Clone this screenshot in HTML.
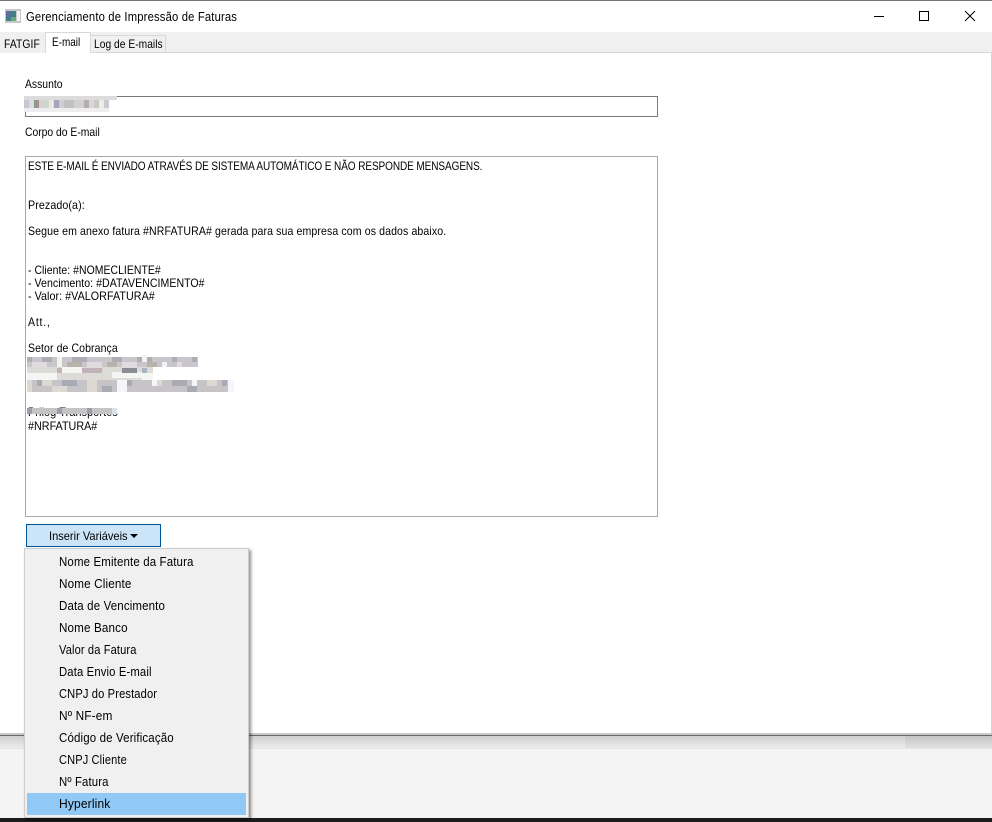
<!DOCTYPE html>
<html><head><meta charset="utf-8"><style>
html,body{margin:0;padding:0;background:#fff}
#p{position:relative;width:992px;height:822px;overflow:hidden;background:#fff;font-family:"Liberation Sans",sans-serif;font-size:12px;color:#000}
#p div{position:absolute;box-sizing:border-box}
.t{white-space:nowrap;line-height:14px;height:14px;transform-origin:0 50%}
.m{font-size:12.5px;left:59px;letter-spacing:.15px}
</style></head><body><div id="p">
<div style="left:0;top:0;width:992px;height:1px;background:#777"></div>
<div style="left:0;top:32px;width:992px;height:21px;background:#f0f0f0"></div>
<div style="left:0;top:52px;width:992px;height:1px;background:#d9d9d9"></div>
<svg style="position:absolute;left:5px;top:9px" width="16" height="14"><rect width="16" height="14" fill="#c8c8c8"/><rect x="1" y="2" width="10" height="10" fill="#3f7f86"/><rect x="1" y="2" width="5" height="6" fill="#5a6f9a"/><rect x="6" y="8" width="5" height="4" fill="#6aa878"/><rect x="12" y="2" width="3" height="10" fill="#f2f2f2"/></svg>
<div class="t" style="left:26px;top:10px;font-size:12.5px;letter-spacing:.18px;transform:scaleX(.9)">Gerenciamento de Impressão de Faturas</div>
<svg style="position:absolute;left:870px;top:8px" width="112" height="18" fill="none" stroke="#000" stroke-width="1"><path d="M4 8.5H14M49.500 3.500H58.500V12.500H49.500ZM95 3L105 13M105 3L95 13"/></svg>
<div style="left:0;top:35px;width:46px;height:18px;background:#f0f0f0;border-right:1px solid #d9d9d9"></div>
<div class="t" style="left:4px;top:37px;font-size:12px;letter-spacing:.1px;transform:scaleX(.86)">FATGIF</div>
<div style="left:45px;top:32px;width:46px;height:21px;background:#fff;border:1px solid #d9d9d9;border-bottom:0"></div>
<div class="t" style="left:52px;top:35px;font-size:12px;transform:scaleX(.83)">E-mail</div>
<div style="left:90px;top:35px;width:76px;height:18px;background:#f0f0f0;border:1px solid #d9d9d9"></div>
<div class="t" style="left:94px;top:37px;font-size:12px;letter-spacing:.04px;transform:scaleX(.852)">Log de E-mails</div>
<div class="t" style="left:25px;top:77px;transform:scaleX(.865)">Assunto</div>
<div style="left:25px;top:96px;width:633px;height:21px;border:1px solid #7a7a7a;background:#fff"></div>
<div style="left:24px;top:96px;width:93px;height:4px;background:#dcdcdc"></div>
<svg style="position:absolute;left:24px;top:100px" width="90" height="12" shape-rendering="crispEdges">
<path fill="#c9c6d2" d="M0 0h5v8H0z"/><path fill="#dadde0" d="M5 0h5v8H5z"/><path fill="#9c948e" d="M10 0h5v8h-5z"/><path fill="#d8d0ca" d="M15 0h5v8h-5z"/><path fill="#cfd6d6" d="M20 0h5v8h-5z"/><path fill="#e8e6de" d="M25 0h5v8h-5z"/><path fill="#a6a4b8" d="M30 0h5v8h-5z"/><path fill="#cdcdd4" d="M35 0h5v8h-5z"/><path fill="#bfc2c0" d="M40 0h10v8H40z"/><path fill="#d2d0d0" d="M50 0h10v8H50z"/><path fill="#b4acb0" d="M60 0h5v8h-5z"/><path fill="#d8d6d8" d="M65 0h5v8h-5z"/><path fill="#c4ccc4" d="M70 0h5v8h-5z"/><path fill="#ecece8" d="M75 0h5v8h-5z"/><path fill="#c8ccd0" d="M80 0h5v8h-5z"/>
<path fill="#eeeef0" d="M0 8h85v4H0z"/>
</svg>
<div class="t" style="left:25px;top:125px;transform:scaleX(.862)">Corpo do E-mail</div>
<div style="left:25px;top:156px;width:633px;height:361px;border:1px solid #a9a9a9;background:#fff"></div>
<div id="b" style="left:28px;top:0;width:620px;height:440px">
<div class="t" style="left:0;top:159px;letter-spacing:-.115px;transform:scaleX(.836)">ESTE E-MAIL É ENVIADO ATRAVÉS DE SISTEMA AUTOMÁTICO E NÃO RESPONDE MENSAGENS.</div>
<div class="t" style="left:0;top:198px;letter-spacing:.1px;transform:scaleX(.89)">Prezado(a):</div>
<div class="t" style="left:0;top:224px;letter-spacing:.12px;transform:scaleX(.88)">Segue em anexo fatura #NRFATURA# gerada para sua empresa com os dados abaixo.</div>
<div class="t" style="left:0;top:263px;letter-spacing:.05px;transform:scaleX(.87)">- Cliente: #NOMECLIENTE#</div>
<div class="t" style="left:0;top:276px;letter-spacing:.05px;transform:scaleX(.88)">- Vencimento: #DATAVENCIMENTO#</div>
<div class="t" style="left:0;top:289px;letter-spacing:.05px;transform:scaleX(.894)">- Valor: #VALORFATURA#</div>
<div class="t" style="left:0;top:315px;letter-spacing:.9px;transform:scaleX(.88)">Att.,</div>
<div class="t" style="left:0;top:341px;letter-spacing:.12px;transform:scaleX(.874)">Setor de Cobrança</div>
<div class="t" style="left:0;top:405px;letter-spacing:.2px;transform:scaleX(.89)">Prilog Transportes</div>
<div class="t" style="left:0;top:419px;letter-spacing:.02px;transform:scaleX(.896)">#NRFATURA#</div>
</div>
<svg style="position:absolute;left:27px;top:355px" width="207" height="60" shape-rendering="crispEdges">
<path fill="#c8c6ca" d="M0 2h171v10H0z"/>
<path fill="#aeacb4" d="M0 2h5v5H0zM15 2h10v5H15zM45 2h15v5H45zM85 2h10v5H85zM110 2h15v5H110zM145 2h5v5H145zM165 2h5v5H165z"/>
<path fill="#f2f2ee" d="M30 2h5v10H30zM115 0h5v7H115zM135 7h5v5H135z"/>
<path fill="#dedcde" d="M5 7h15v5H5zM60 7h15v5H60zM95 7h15v5H95zM150 7h5v5H150z"/>
<path fill="#b8b2aa" d="M40 7h15v5H40zM80 7h10v5H80zM120 7h10v5H120z"/>
<path fill="#dddbd8" d="M0 12h126v13H0z"/>
<path fill="#f5f5f3" d="M35 12h20v6H35zM85 17h30v6H85zM0 18h30v7H0zM115 18h11v7H115z"/>
<path fill="#c0b2b8" d="M30 13h5v5H30zM55 13h20v5H55z"/>
<path fill="#8c8c96" d="M95 13h15v5H95z"/>
<path fill="#a8b4c2" d="M115 13h5v5H115z"/>
<path fill="#c6c4c6" d="M0 25h207v12H0z"/>
<path fill="#ddd8d2" d="M0 25h5v12H0zM15 25h10v6H15zM60 25h10v12H60zM130 25h5v6H130zM180 25h10v6H180zM25 31h15v6H25z"/>
<path fill="#a8aab4" d="M10 25h5v6H10zM35 25h15v6H35zM100 25h5v6H100zM145 25h15v6H145zM195 25h5v6H195zM75 31h10v6H75zM160 31h10v6H160z"/>
<path fill="#f4f6fa" d="M90 25h10v12H90zM125 25h5v6H125zM165 25h5v6H165zM201 25h6v12H201z"/>
<path fill="#9f9ea8" d="M0 53h5v6H0zM30 53h5v6H30zM60 53h5v6H60z"/>
<path fill="#c4c4c4" d="M5 53h25v6H5zM35 53h25v6H35zM65 53h20v6H65z"/>
<path fill="#dde2e8" d="M85 53h5v6H85z"/>
</svg>
<div style="left:26px;top:524px;width:135px;height:23px;background:#cce4f7;border:1px solid #005499"></div>
<div class="t" style="left:49px;top:529px;font-size:12px;transform:scaleX(.923)">Inserir Variáveis</div>
<svg style="position:absolute;left:130px;top:534px" width="8" height="5"><path d="M0 0H8L4 4Z" fill="#000"/></svg>
<div style="left:0;top:733px;width:992px;height:2px;background:#c9c9c9"></div>
<div style="left:0;top:735px;width:992px;height:1px;background:#666"></div>
<div style="left:0;top:736px;width:905px;height:12px;background:linear-gradient(#cfcfcf,#ececec)"></div>
<div style="left:905px;top:736px;width:87px;height:12px;background:linear-gradient(#c4c4c4,#e2e2e2)"></div>
<div style="left:0;top:748px;width:992px;height:70px;background:#f4f4f4;border-top:1px solid #e4e4e4"></div>
<div style="left:0;top:818px;width:992px;height:4px;background:#1c1c1c"></div>
<div style="left:991px;top:53px;width:1px;height:680px;background:#d4d4d4"></div>
<div style="left:24px;top:548px;width:225px;height:270px;background:#f0f0f0;border:1px solid #cdcdcd;box-shadow:2px 2px 3px rgba(0,0,0,.45)"></div>
<div style="left:27px;top:793px;width:219px;height:22px;background:#90c8f6"></div>
<div class="t m" style="top:555px;transform:scaleX(.918)">Nome Emitente da Fatura</div>
<div class="t m" style="top:577px;transform:scaleX(.936)">Nome Cliente</div>
<div class="t m" style="top:599px;transform:scaleX(.92)">Data de Vencimento</div>
<div class="t m" style="top:621px;transform:scaleX(.932)">Nome Banco</div>
<div class="t m" style="top:643px;transform:scaleX(.886)">Valor da Fatura</div>
<div class="t m" style="top:665px;transform:scaleX(.903)">Data Envio E-mail</div>
<div class="t m" style="top:687px;transform:scaleX(.89)">CNPJ do Prestador</div>
<div class="t m" style="top:709px;transform:scaleX(.947)">Nº NF-em</div>
<div class="t m" style="top:731px;transform:scaleX(.92)">Código de Verificação</div>
<div class="t m" style="top:753px;transform:scaleX(.883)">CNPJ Cliente</div>
<div class="t m" style="top:775px;transform:scaleX(.91)">Nº Fatura</div>
<div class="t m" style="top:797px;transform:scaleX(.963)">Hyperlink</div>
</div></body></html>
